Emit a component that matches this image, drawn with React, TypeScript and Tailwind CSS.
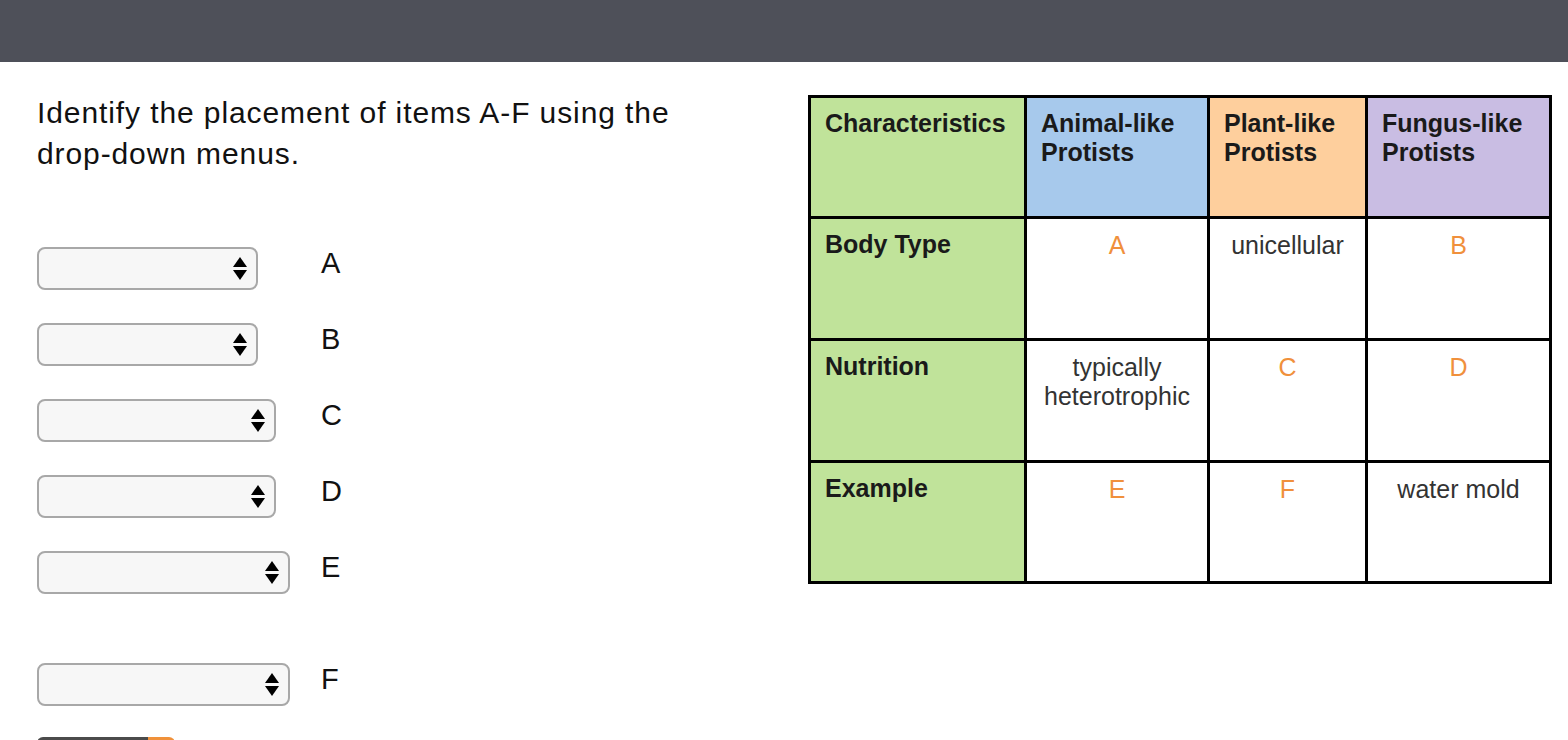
import React from "react";

const font = { fontFamily: '"Liberation Sans", Arial, sans-serif' };

function Select({ w }: { w: string }) {
  return (
    <div className={`${w} h-[43px] rounded-[8px] border-2 border-[#a8a8a8] bg-[#f7f7f7] flex items-center justify-end pr-[9px]`}>
      <svg width="14" height="28" viewBox="0 0 14 28">
        <polygon points="7,2 14,12 0,12" fill="#000" />
        <polygon points="0,15 14,15 7,25" fill="#000" />
      </svg>
    </div>
  );
}

const rows: { l: string; w: string; mt: string }[] = [
  { l: "A", w: "w-[221px]", mt: "mt-0" },
  { l: "B", w: "w-[221px]", mt: "mt-[33px]" },
  { l: "C", w: "w-[239px]", mt: "mt-[33px]" },
  { l: "D", w: "w-[239px]", mt: "mt-[33px]" },
  { l: "E", w: "w-[253px]", mt: "mt-[33px]" },
  { l: "F", w: "w-[253px]", mt: "mt-[69px]" },
];

const O = "text-[#f0903c]";
const T = "text-[#333]";

export default function App() {
  return (
    <div className="w-[1568px] h-[740px] overflow-hidden bg-white" style={font}>
      <div className="h-[62px] bg-[#4e5059]" />
      <div className="flex">
        <div className="w-[808px] shrink-0 pl-[37px] pt-[30px]">
          <p className="text-[30px] leading-[41px] tracking-[0.9px] text-[#111]">
            Identify the placement of items A-F using the
            <br />
            drop-down menus.
          </p>
          <div className="mt-[73px]">
            {rows.map((r) => (
              <div key={r.l} className={`flex items-start ${r.mt}`}>
                <div className="w-[284px]">
                  <Select w={r.w} />
                </div>
                <div className="text-[29px] leading-[32px] text-[#111]">{r.l}</div>
              </div>
            ))}
          </div>
          <div className="mt-[31px] flex w-[138px] h-[10px] rounded-tl-[6px] overflow-hidden">
            <div className="w-[111px] bg-[#4b4b4b]" />
            <div className="flex-1 bg-[#f0913a] rounded-tr-[6px]" />
          </div>
        </div>
        <div className="pt-[33px]">
          <table className="table-fixed border-collapse border-[3px] border-black w-[741px] text-[25px] leading-[29px]">
            <colgroup>
              <col className="w-[216px]" />
              <col className="w-[183px]" />
              <col className="w-[158px]" />
              <col className="w-[184px]" />
            </colgroup>
            <tbody>
              <tr className="h-[121px]">
                <td className="border-[3px] border-black bg-[#c0e39a] align-top pl-[14px] pr-[4px] pt-[11px] font-bold text-[#1a1a1a]">Characteristics</td>
                <td className="border-[3px] border-black bg-[#a7c9ec] align-top pl-[14px] pt-[11px] font-bold text-[#1a1a1a]">Animal-like<br />Protists</td>
                <td className="border-[3px] border-black bg-[#fecf9d] align-top pl-[14px] pt-[11px] font-bold text-[#1a1a1a]">Plant-like<br />Protists</td>
                <td className="border-[3px] border-black bg-[#c9bde3] align-top pl-[14px] pt-[11px] font-bold text-[#1a1a1a]">Fungus-like<br />Protists</td>
              </tr>
              <tr className="h-[122px]">
                <td className="border-[3px] border-black bg-[#c0e39a] align-top pl-[14px] pt-[11px] font-bold text-[#1a1a1a]">Body Type</td>
                <td className={`border-[3px] border-black align-top text-center pt-[12px] ${O}`}>A</td>
                <td className={`border-[3px] border-black align-top text-center pt-[12px] ${T}`}>unicellular</td>
                <td className={`border-[3px] border-black align-top text-center pt-[12px] ${O}`}>B</td>
              </tr>
              <tr className="h-[122px]">
                <td className="border-[3px] border-black bg-[#c0e39a] align-top pl-[14px] pt-[11px] font-bold text-[#1a1a1a]">Nutrition</td>
                <td className={`border-[3px] border-black align-top text-center pt-[12px] ${T}`}>typically<br />heterotrophic</td>
                <td className={`border-[3px] border-black align-top text-center pt-[12px] ${O}`}>C</td>
                <td className={`border-[3px] border-black align-top text-center pt-[12px] ${O}`}>D</td>
              </tr>
              <tr className="h-[121px]">
                <td className="border-[3px] border-black bg-[#c0e39a] align-top pl-[14px] pt-[11px] font-bold text-[#1a1a1a]">Example</td>
                <td className={`border-[3px] border-black align-top text-center pt-[12px] ${O}`}>E</td>
                <td className={`border-[3px] border-black align-top text-center pt-[12px] ${O}`}>F</td>
                <td className={`border-[3px] border-black align-top text-center pt-[12px] ${T}`}>water mold</td>
              </tr>
            </tbody>
          </table>
        </div>
      </div>
    </div>
  );
}
